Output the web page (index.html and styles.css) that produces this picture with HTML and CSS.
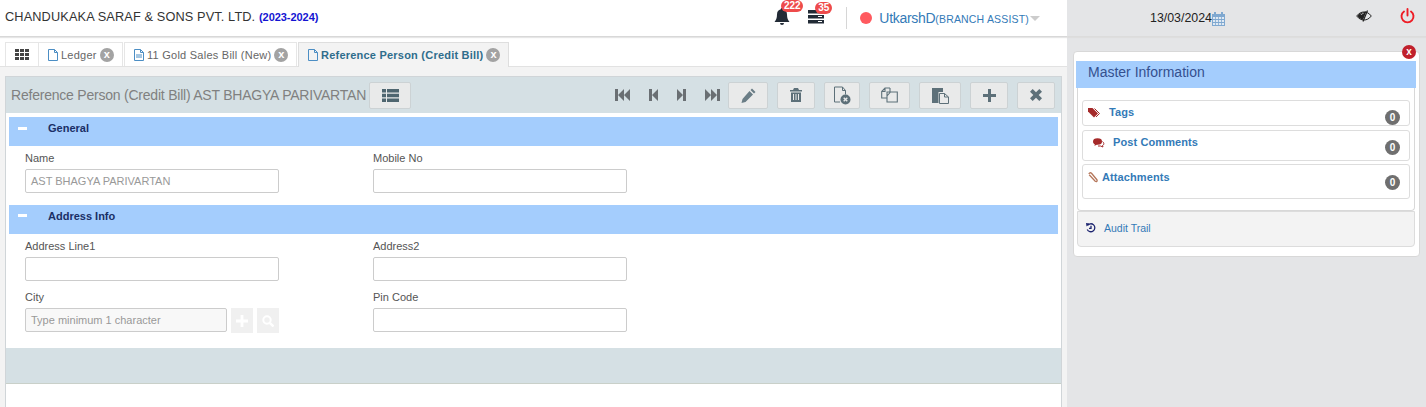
FILE: index.html
```
<!DOCTYPE html>
<html lang="en">
<head>
<meta charset="utf-8">
<title>Reference Person (Credit Bill)</title>
<link rel="stylesheet" href="styles.css">
</head>
<body>
<div class="app">
  <main class="main">
    <header class="topbar">
      <div class="brand">CHANDUKAKA SARAF &amp; SONS PVT. LTD. <span class="year">(2023-2024)</span></div>
      <div class="top-right">
        <span class="notif bell">
          <svg width="16" height="17" viewBox="0 0 16 17"><path fill="#222b36" d="M8 0a1.2 1.2 0 0 1 1.2 1.3C11.6 1.8 13 3.800 13 6.500c0 4 1 5.500 2.500 7.500H.5C2 12 3 10.500 3 6.500 3 3.800 4.400 1.800 6.800 1.300A1.200 1.200 0 0 1 8 0zM6 15h4a2 2 0 0 1-4 0z"/></svg>
          <span class="badge badge-a">222</span>
        </span>
        <span class="notif tasks">
          <svg width="17" height="14" viewBox="0 0 17 14"><path fill="#222b36" d="M0 0h16v3.500H0zM0 5h16v3.500H0zM0 10h16v3.500H0z"/><path fill="#fff" d="M10 1h4v1h-4zM10 6h4v1h-4zM10 11h4v1h-4z"/></svg>
          <span class="badge badge-b">35</span>
        </span>
        <span class="divider"></span>
        <span class="status-dot"></span>
        <span class="user">UtkarshD<small>(BRANCH ASSIST)</small></span>
        <span class="caret"></span>
      </div>
    </header>

    <nav class="tabs">
      <div class="tab tab-grid">
        <svg width="14" height="11" viewBox="0 0 14 11"><path fill="#444" d="M0 0h4v3H0zM5 0h4v3H5zM10 0h4v3h-4zM0 4h4v3H0zM5 4h4v3H5zM10 4h4v3h-4zM0 8h4v3H0zM5 8h4v3H5zM10 8h4v3h-4z"/></svg>
      </div>
      <div class="tab tab-ledger">
        <svg class="doc" width="10" height="12" viewBox="0 0 10 12"><path fill="none" stroke="#4c8ec4" d="M.5.500h6l3 3v8h-9zM6.500.500v3h3"/></svg>
        <span>Ledger</span><span class="close">x</span>
      </div>
      <div class="tab tab-sales">
        <svg class="doc" width="10" height="12" viewBox="0 0 10 12"><path fill="none" stroke="#4c8ec4" d="M.5.500h6l3 3v8h-9zM6.500.500v3h3M2 6h6M2 8h6"/></svg>
        <span>11 Gold Sales Bill (New)</span><span class="close">x</span>
      </div>
      <div class="tab tab-active">
        <svg class="doc" width="10" height="12" viewBox="0 0 10 12"><path fill="none" stroke="#4c8ec4" d="M.5.500h6l3 3v8h-9zM6.500.500v3h3"/></svg>
        <span>Reference Person (Credit Bill)</span><span class="close">x</span>
      </div>
    </nav>

    <div class="stage">
      <section class="panel">
        <div class="panel-head">
          <h1 class="panel-title">Reference Person (Credit Bill) AST BHAGYA PARIVARTAN</h1>
          <button class="btn btn-list" type="button">
            <svg width="17" height="13" viewBox="0 0 17 13"><path fill="#4f6670" d="M0 0h4v3.400H0zM5 0h12v3.400H5zM0 4.800h4v3.400H0zM5 4.800h12v3.400H5zM0 9.600h4V13H0zM5 9.600h12V13H5z"/></svg>
          </button>
          <div class="nav-icons">
            <svg width="15" height="12" viewBox="0 0 15 12"><path fill="#6a6f73" d="M0 0h3v12H0zM3 6l6-6v12zM9 6l6-6v12z"/></svg>
            <svg width="9" height="12" viewBox="0 0 9 12"><path fill="#6a6f73" d="M0 0h3v12H0zM3 6l6-6v12z"/></svg>
            <svg width="9" height="12" viewBox="0 0 9 12"><path fill="#6a6f73" d="M9 0H6v12h3zM6 6L0 0v12z"/></svg>
            <svg width="15" height="12" viewBox="0 0 15 12"><path fill="#6a6f73" d="M15 0h-3v12h3zM12 6L6 0v12zM6 6L0 0v12z"/></svg>
          </div>
          <div class="actions">
            <button class="btn w40" type="button"><svg width="15" height="15" viewBox="0 0 15 15"><path fill="#6a7d86" d="M11 0.500l3.500 3.500-1.500 1.500-3.500-3.500zM8.500 3l3.500 3.500-7.500 7.500-4 1 1-4z"/></svg></button>
            <button class="btn w38" type="button"><svg width="12" height="14" viewBox="0 0 12 14"><path fill="#5d7079" fill-rule="evenodd" d="M4 0h4l1 2h3v1.500H0V2h3zM1 4.500h10V14H1zM3 6v6h1V6zM5.500 6v6h1V6zM8 6v6h1V6z"/></svg></button>
            <button class="btn w36" type="button"><svg width="18" height="19" viewBox="0 0 18 19"><path fill="none" stroke="#5d7079" d="M1.500 1h8l3 3.500v4M9.500 1v3.500h3M1.500 1v15H7"/><circle cx="12.500" cy="13.500" r="5" fill="#5d7079"/><path stroke="#e9eaea" stroke-width="1.400" d="M10.700 11.700l3.600 3.600M14.300 11.700l-3.600 3.600"/></svg></button>
            <button class="btn w41" type="button"><svg width="17" height="16" viewBox="0 0 17 16"><path fill="none" stroke="#5d7079" stroke-width="1.100" d="M9 1H4L.7 4.500V11h5M4 1v3.500H.7M9 1v4M10 5H6L6 15h10.300V5zM6 9l3.500-4"/></svg></button>
            <button class="btn w42" type="button"><svg width="17" height="17" viewBox="0 0 17 17"><path fill="#5d7079" d="M0 1h11v4H6.500v11H0z"/><path fill="#e9eaea" stroke="#5d7079" d="M7.500 6.500h5l4 3.500v6.500h-9z"/><path fill="none" stroke="#5d7079" d="M12.500 6.500V10h4"/></svg></button>
            <button class="btn w38" type="button"><svg width="13" height="13" viewBox="0 0 13 13"><path fill="#5d7079" d="M5 0h3v5h5v3H8v5H5V8H0V5h5z"/></svg></button>
            <button class="btn w38" type="button"><svg width="12" height="12" viewBox="0 0 12 12"><path fill="#5d7079" d="M2.700 0L6 3.300 9.300 0 12 2.700 8.700 6 12 9.300 9.300 12 6 8.700 2.700 12 0 9.300 3.300 6 0 2.700z"/></svg></button>
          </div>
        </div>

        <div class="panel-body">
          <div class="section-bar"><span class="minus"></span><span>General</span></div>
          <div class="form form-first">
            <div class="field"><label>Name</label><div class="input readonly">AST BHAGYA PARIVARTAN</div></div>
            <div class="field"><label>Mobile No</label><div class="input"></div></div>
          </div>
          <div class="section-bar section-second"><span class="minus"></span><span>Address Info</span></div>
          <div class="form form-second">
            <div class="field"><label>Address Line1</label><div class="input"></div></div>
            <div class="field"><label>Address2</label><div class="input"></div></div>
            <div class="field">
              <label>City</label>
              <div class="city-row">
                <div class="input readonly city">Type minimum 1 character</div>
                <span class="mini-btn"><svg width="12" height="12" viewBox="0 0 13 13"><path fill="#fff" d="M5 0h3v5h5v3H8v5H5V8H0V5h5z"/></svg></span>
                <span class="mini-btn"><svg width="12" height="12" viewBox="0 0 12 12"><circle cx="5" cy="5" r="3.700" fill="none" stroke="#fff" stroke-width="2"/><path stroke="#fff" stroke-width="2.400" d="M7.800 7.800L11.500 11.500"/></svg></span>
              </div>
            </div>
            <div class="field"><label>Pin Code</label><div class="input"></div></div>
          </div>
        </div>
        <div class="panel-foot"></div>
      </section>
    </div>
  </main>

  <aside class="side">
    <div class="side-top">
      <span class="date">13/03/2024</span>
      <svg class="cal" width="13" height="14" viewBox="0 0 13 14"><path fill="#7fa8d0" d="M2 0h2v2h5V0h2v2h2v12H0V2h2z"/><path fill="#dfe9f3" d="M1 5h2.200v2H1zM4 5h2.200v2H4zM7 5h2.200v2H7zM10 5h2v2h-2zM1 8h2.200v2H1zM4 8h2.200v2H4zM7 8h2.200v2H7zM10 8h2v2h-2zM1 11h2.200v2H1zM4 11h2.200v2H4zM7 11h2.200v2H7zM10 11h2v2h-2z"/></svg>
      <svg class="eye" width="16" height="12" viewBox="0 0 16 12"><path fill="none" stroke="#222" stroke-width="1" d="M.7 6C3 3 5.500 2 8 2s5 1 7.300 4C13 9 10.500 10 8 10S3 9 .7 6z"/><path fill="#222" d="M1.500 6C3 4 5 3 7 2.600L10.600 1 7 9.800C5 9.500 3 8 1.500 6z"/><path fill="none" stroke="#e4e5e7" stroke-width=".8" d="M5 5c.5-1 1.500-1.500 2.500-1.500"/><path stroke="#222" stroke-width="1.200" d="M11.500 .5L7 11.500"/></svg>
      <svg class="power" width="15" height="16" viewBox="0 0 15 16"><path fill="none" stroke="#ee1c25" stroke-width="1.900" stroke-linecap="round" d="M7.500 1v6.500M4 3.500a6 6 0 1 0 7 0"/></svg>
    </div>
    <div class="side-card">
      <span class="card-close">x</span>
      <div class="master-bar">Master Information</div>
      <div class="inner">
        <div class="row row-tags">
          <svg class="i-tag" width="12" height="10" viewBox="0 0 12 10"><path fill="#a52a2a" d="M0 0h4.500L10 5.500 6 9.500 0 3.500z"/><path fill="none" stroke="#a52a2a" d="M6.500 .5L11.500 5.500 8 9"/></svg>
          <a class="link">Tags</a><span class="count">0</span>
        </div>
        <div class="row row-comments">
          <svg class="i-comment" width="12" height="10" viewBox="0 0 12 10"><ellipse cx="4.500" cy="3.500" rx="4.500" ry="3.200" fill="#a52a2a"/><path fill="#a52a2a" d="M2 5.500L1.500 8 4.500 6z"/><path fill="none" stroke="#a52a2a" d="M9.500 3.500c2 1.500 1.500 3.500 0 4l.5 1.500-2.500-1H5"/></svg>
          <a class="link">Post Comments</a><span class="count">0</span>
        </div>
        <div class="row row-attach">
          <svg class="i-clip" width="10" height="11" viewBox="0 0 10 11"><path fill="none" stroke="#b5765a" stroke-width="1.300" d="M1.200 2.800l6 6.500c1.500 1 2.500-.5 1.500-1.800L3.500 1.300C2.500 .3 1 .8 1 2"/></svg>
          <a class="link">Attachments</a><span class="count">0</span>
        </div>
      </div>
      <div class="audit">
        <svg width="10" height="10" viewBox="0 0 10 10"><path fill="none" stroke="#1d2570" stroke-width="1.300" d="M1.500 2.500A4 4 0 1 1 1.200 6.500M5 2.800V5.300H3"/><path fill="#1d2570" d="M0 0l3.500 .5L.5 3.500z"/></svg>
        <a class="audit-link">Audit Trail</a>
      </div>
    </div>
  </aside>
</div>
</body>
</html>
```

FILE: styles.css
```
* { box-sizing: border-box; }
html, body { margin: 0; height: 407px; overflow: hidden; }
body { font-family: "Liberation Sans", Arial, sans-serif; font-size: 11px; color: #333; background: #fff; }
svg { display: block; flex: none; }

.app { display: flex; height: 407px; overflow: hidden; }
.main { width: 1067px; flex: none; display: flex; flex-direction: column; background: #f3f3f3; }

/* top bar */
.topbar { height: 37px; flex: none; background: #fff; border-bottom: 1px solid #d8d8d8; box-shadow: 0 1px 1px #e6e6e6; display: flex; align-items: center; justify-content: space-between; padding: 0 27px 1px 5px; position: relative; }
.brand { font-size: 12.75px; color: #333; padding-bottom: 3px; letter-spacing: .12px; }
.year { font-size: 11px; font-weight: 700; color: #1414d2; letter-spacing: -.05px; }
.top-right { display: flex; align-items: center; height: 36px; }
.notif { position: relative; display: block; }
.bell { margin-right: 18px; margin-bottom: 3px; }
.tasks { margin-right: 21px; margin-bottom: 2px; }
.badge { position: absolute; background: #ee4b4b; color: #fff; font-size: 10px; font-weight: 700; line-height: 12px; height: 12px; border-radius: 6px; text-align: center; overflow: hidden; }
.badge-a { width: 22px; left: 7px; top: -8px; }
.badge-b { width: 17px; left: 7px; top: -8px; }
.divider { width: 1px; height: 22px; background: #d6d6d6; margin-right: 13px; }
.status-dot { width: 12px; height: 12px; border-radius: 50%; background: #ff5a5f; margin-right: 7px; }
.user { font-size: 14px; color: #337ab7; letter-spacing: -.3px; }
.user small { font-size: 10.5px; font-weight: 400; letter-spacing: .18px; }
.caret { width: 0; height: 0; border-left: 5px solid transparent; border-right: 5px solid transparent; border-top: 5px solid #ccc; margin-left: 1px; margin-top: 1px; }

/* tabs */
.tabs { height: 30px; flex: none; background: #fff; border-bottom: 1px solid #e2e2e2; display: flex; align-items: flex-end; padding-left: 5px; }
.tab { height: 24px; background: #fff; border: 1px solid #e6e6e6; border-bottom: none; border-left: none; display: flex; align-items: center; font-size: 11px; color: #666; letter-spacing: .25px; }
.tab-grid { width: 34px; padding-left: 9px; border-left: 1px solid #e6e6e6; }
.tab-ledger { width: 84px; padding-left: 9px; margin-right: 1px; border-left: none; }
.tab-sales { width: 173px; padding-left: 9px; margin-right: 1px; border-left: 1px solid #e6e6e6; }
.tab-active { width: 211px; height: 25px; padding-left: 9px; margin-bottom: -1px; background: #f3f3f3; border: 1px solid #dedede; border-bottom: none; color: #2f6d8c; font-weight: 700; letter-spacing: .22px; position: relative; }
.doc { margin-right: 3px; }
.close { width: 14px; height: 14px; border-radius: 50%; background: #a3a3a3; color: #fff; font-size: 11px; font-weight: 700; line-height: 13px; text-align: center; margin-left: 3px; letter-spacing: 0; }

/* panel */
.stage { flex: 1; padding: 9px 5px 0; min-height: 0; }
.panel { height: 100%; background: #fff; border: 1px solid #d0d5d8; border-bottom: none; display: flex; flex-direction: column; width: 1057px; }
.panel-head { height: 36px; flex: none; background: #d5e0e4; display: flex; align-items: center; padding: 0 6px 0 5px; }
.panel-title { margin: 0; font-size: 14px; font-weight: 400; color: #808080; letter-spacing: -.22px; white-space: nowrap; }
.btn { height: 27px; background: #e9eaea; border: 1px solid #ccd2d4; border-radius: 2px; padding: 0; display: flex; align-items: center; justify-content: center; }
.btn-list { width: 42px; margin-left: 3px; }
.nav-icons { display: flex; align-items: center; margin-left: auto; margin-right: 8px; }
.nav-icons svg:nth-child(1) { margin-right: 19px; }
.nav-icons svg:nth-child(2) { margin-right: 19px; }
.nav-icons svg:nth-child(3) { margin-right: 19px; }
.actions { display: flex; gap: 9px; }
.w36 { width: 36px; }
.w38 { width: 38px; }
.w40 { width: 40px; }
.w41 { width: 41px; }
.w42 { width: 42px; }

.panel-body { height: 235px; flex: none; padding: 4px 3px 0; }
.section-bar { height: 29px; background: #a4cdfd; display: flex; align-items: center; color: #1a2f66; font-weight: 700; font-size: 11px; padding-bottom: 7px; }
.section-second { margin-top: 12px; padding-bottom: 8px; }
.minus { width: 9px; height: 3px; background: #fff; margin-left: 9px; margin-right: 21px; }
.form { display: grid; grid-template-columns: 254px 254px; column-gap: 94px; padding-left: 16px; }
.form-first { padding-top: 6px; }
.form-second { padding-top: 6px; row-gap: 10px; }
.field label { display: block; font-size: 11px; color: #555; line-height: 12px; margin-bottom: 5px; }
.input { height: 24px; border: 1px solid #ccc; border-radius: 2px; background: #fff; font-size: 11px; color: #999; line-height: 22px; padding-left: 5px; }
.readonly { background: #fafafa; }
.form-first .readonly { background: #fff; }
.city-row { display: flex; }
.city { width: 202px; margin-right: 4px; background: #f8f8f8; }
.mini-btn { width: 22px; height: 25px; background: #f0f0f0; display: flex; align-items: center; justify-content: center; margin-right: 4px; }
.mini-btn:last-child { margin-right: 0; }
.panel-foot { height: 36px; flex: none; background: #d5e0e4; border-bottom: 1px solid #c9d0c9; }

/* sidebar */
.side { flex: 1; background: #e4e5e7; min-width: 0; }
.side-top { height: 37px; border-bottom: 1px solid #dcdcdc; box-shadow: 0 1px 1px #dedede; display: flex; align-items: center; padding: 0 0 1px 83px; }
.date { font-size: 12.4px; color: #222; }
.cal { margin-top: 2px; }
.eye { margin-left: 131px; margin-bottom: 4px; }
.power { margin-left: 28px; margin-bottom: 4px; }
.side-card { position: relative; width: 347px; height: 206px; margin: 14px 0 0 6px; background: #fff; border: 1px solid #d8d8d8; border-radius: 4px; padding: 9px 3px 0 2px; }
.card-close { position: absolute; right: 3px; top: -7px; width: 14px; height: 14px; border-radius: 50%; background: #c0202c; color: #fff; font-size: 10px; font-weight: 700; line-height: 13px; text-align: center; }
.master-bar { height: 27px; background: #a4cdfd; color: #34508f; font-size: 14px; line-height: 23px; padding-left: 12px; }
.inner { margin-left: 1px; width: 338px; height: 123px; border: 1px solid #d8d8d8; border-top: none; border-radius: 0 0 4px 4px; padding: 12px 4px 0; display: flex; flex-direction: column; gap: 4px; }
.row { position: relative; border: 1px solid #ddd; border-radius: 3px; display: flex; align-items: flex-start; padding-left: 5px; }
.row-tags { height: 26px; padding-top: 5px; }
.row-comments { height: 31px; padding-top: 5px; padding-left: 10px; }
.row-attach { height: 35px; margin-top: -1px; padding-top: 6px; }
.link { font-size: 11px; font-weight: 700; color: #337ab7; line-height: 13px; letter-spacing: .1px; }
.i-tag { margin-top: 2px; margin-right: 9px; }
.i-comment { margin-top: 2px; margin-right: 8px; }
.i-clip { margin-right: 4px; margin-top: 1px; }
.count { position: absolute; right: 9px; bottom: 0; width: 15px; height: 15px; border-radius: 50%; background: #6f6f6f; color: #fff; font-size: 10px; font-weight: 700; line-height: 15px; text-align: center; }
.row-comments .count { bottom: 5px; }
.row-attach .count { bottom: 8px; }
.audit { margin-left: 1px; width: 338px; height: 36px; background: #f3f3f3; border: 1px solid #dcdcdc; border-radius: 0 0 4px 4px; display: flex; align-items: center; padding: 0 0 2px 8px; }
.audit-link { margin-left: 8px; font-size: 10.5px; color: #337ab7; }
```
